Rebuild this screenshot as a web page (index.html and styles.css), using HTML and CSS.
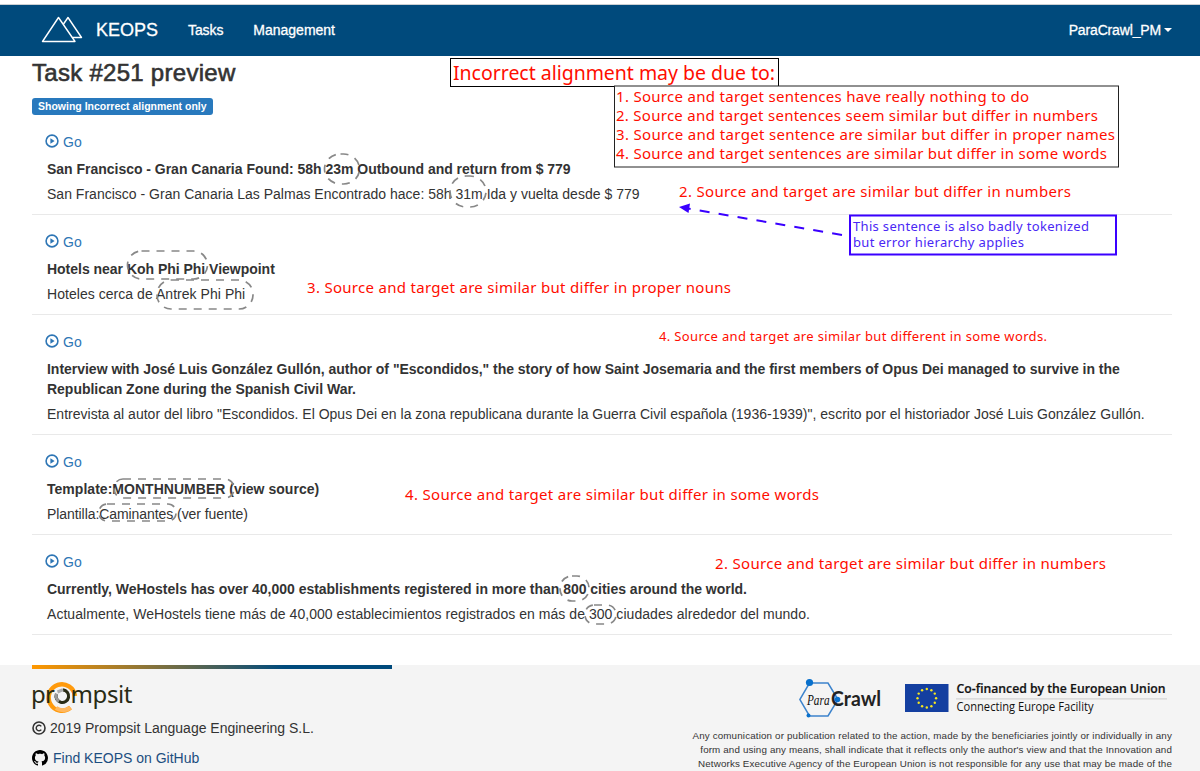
FILE: index.html
```html
<!DOCTYPE html>
<html lang="en">
<head>
<meta charset="utf-8">
<title>KEOPS - Task preview</title>
<link rel="stylesheet" href="styles.css">
</head>
<body>
<svg class="defs" width="0" height="0">
  <symbol id="play" viewBox="0 0 14 14"><circle cx="7" cy="7" r="5.9" fill="none" stroke="currentColor" stroke-width="1.6"/><path d="M5.4 4.3v5.4L9.6 7z" fill="currentColor"/></symbol>
</svg>
<header class="navbar">
  <svg class="brand-icon" width="42" height="28" viewBox="0 0 42 28" fill="none" stroke="#fff" stroke-width="1.4" stroke-linejoin="round"><path d="M1.5 25.5 17.5 1.5 34 25.5z"/><path d="M22.5 8 27 1.5 40.5 21.5H31.5"/></svg>
  <a class="brand">KEOPS</a>
  <nav class="nav"><a class="tasks">Tasks</a><a class="management">Management</a></nav>
  <a class="user">ParaCrawl_PM<span class="caret"></span></a>
</header>
<main class="content">
  <h1 class="title"><span>Task #251 preview</span></h1>
  <div class="filter"><span class="label">Showing Incorrect alignment only</span></div>
  <section class="pair">
    <a class="go"><svg width="14" height="14"><use href="#play"/></svg>Go</a>
    <p class="source">San Francisco - Gran Canaria Found: 58h 23m Outbound and return from $ 779</p>
    <p class="target">San Francisco - Gran Canaria Las Palmas Encontrado hace: 58h 31m Ida y vuelta desde $ 779</p>
  </section>
  <section class="pair">
    <a class="go"><svg width="14" height="14"><use href="#play"/></svg>Go</a>
    <p class="source">Hotels near Koh Phi Phi Viewpoint</p>
    <p class="target roomy">Hoteles cerca de Antrek Phi Phi</p>
  </section>
  <section class="pair">
    <a class="go"><svg width="14" height="14"><use href="#play"/></svg>Go</a>
    <p class="source">Interview with José Luis González Gullón, author of "Escondidos," the story of how Saint Josemaria and the first members of Opus Dei managed to survive in the<br>Republican Zone during the Spanish Civil War.</p>
    <p class="target">Entrevista al autor del libro "Escondidos. El Opus Dei en la zona republicana durante la Guerra Civil española (1936-1939)", escrito por el historiador José Luis González Gullón.</p>
  </section>
  <section class="pair">
    <a class="go"><svg width="14" height="14"><use href="#play"/></svg>Go</a>
    <p class="source roomy">Template:MONTHNUMBER (view source)</p>
    <p class="target snug">Plantilla:Caminantes (ver fuente)</p>
  </section>
  <section class="pair">
    <a class="go"><svg width="14" height="14"><use href="#play"/></svg>Go</a>
    <p class="source">Currently, WeHostels has over 40,000 establishments registered in more than 800 cities around the world.</p>
    <p class="target roomy">Actualmente, WeHostels tiene más de 40,000 establecimientos registrados en más de 300 ciudades alrededor del mundo.</p>
  </section>
</main>
<footer class="footer">
  <div class="company">
    <div class="stripe"></div>
    <svg class="prompsit" width="104" height="34" viewBox="0 0 104 34">
      <path d="M38.5 27.5A13.2 13.2 0 1 1 43 16" fill="none" stroke="#ff9a0c" stroke-width="4.4"/>
      <path d="M38.5 27.8A13 13 0 0 1 24 28" fill="none" stroke="#ffb75e" stroke-width="4.2"/>
      <circle cx="30.3" cy="16.3" r="7.5" fill="#f4f4f4"/>
      <path d="M31 9.9A6.3 6.3 0 1 1 24.4 14" fill="none" stroke="#292b15" stroke-width="3.1"/>
      <path d="M24.6 13.6A6.3 6.3 0 0 0 27 21.3" fill="none" stroke="#999" stroke-width="3"/>
      <path d="M25.5 12 31 9.7" stroke="#aaa" stroke-width="3"/>
      <g class="logo-word"><text x="-1" y="23" textLength="24">pr</text><text x="38.5" y="23" textLength="62">mpsit</text></g>
    </svg>
    <p class="copyright"><svg width="14" height="14" viewBox="0 0 14 14" fill="none" stroke="#333"><circle cx="7" cy="7" r="6" stroke-width="1.6"/><path d="M9.3 5.4A2.8 2.8 0 1 0 9.3 8.6" stroke-width="1.4"/></svg>2019 Prompsit Language Engineering S.L.</p>
    <a class="github"><svg width="16" height="16" viewBox="0 0 16 16"><path d="M8 0C3.58 0 0 3.58 0 8c0 3.54 2.29 6.53 5.47 7.59.4.07.55-.17.55-.38 0-.19-.01-.82-.01-1.49-2.01.37-2.53-.49-2.69-.94-.09-.23-.48-.94-.82-1.13-.28-.15-.68-.52-.01-.53.63-.01 1.08.58 1.23.82.72 1.21 1.87.87 2.33.66.07-.52.28-.87.51-1.07-1.78-.2-3.64-.89-3.64-3.95 0-.87.31-1.59.82-2.15-.08-.2-.36-1.02.08-2.12 0 0 .67-.21 2.2.82.64-.18 1.32-.27 2-.27s1.36.09 2 .27c1.53-1.04 2.2-.82 2.2-.82.44 1.1.16 1.92.08 2.12.51.56.82 1.27.82 2.15 0 3.07-1.87 3.75-3.65 3.95.29.25.54.73.54 1.48 0 1.07-.01 1.93-.01 2.2 0 .21.15.46.55.38A8.01 8.01 0 0 0 16 8c0-4.42-3.58-8-8-8z"/></svg><span>Find KEOPS on GitHub</span></a>
  </div>
  <div class="funding">
    <div class="logos">
      <svg width="83" height="42" viewBox="0 0 83 42">
        <path d="M10.5 6H29L39 22.5 29 39H10.5L.8 22.5z" fill="none" stroke="#3c83cc" stroke-width="1.5"/>
        <circle cx="10.5" cy="5.5" r="3.6" fill="#0870cc"/><circle cx="9.5" cy="38.5" r="2" fill="#0870cc"/><circle cx="38.5" cy="22.5" r="2.8" fill="#0870cc"/>
        <text class="para" x="8" y="28" textLength="22.5" lengthAdjust="spacingAndGlyphs">Para</text>
        <text class="crawl" x="32" y="29" textLength="50" lengthAdjust="spacingAndGlyphs">Crawl</text>
      </svg>
      <svg width="267" height="42" viewBox="0 0 267 42">
        <path d="M0 7H43.5V35H0z" fill="#143fa0"/>
        <g fill="#f7e71c"><circle cx="21.8" cy="12" r="1.2"/><circle cx="26.4" cy="13.2" r="1.2"/><circle cx="29.8" cy="16.6" r="1.2"/><circle cx="31.1" cy="21.2" r="1.2"/><circle cx="29.8" cy="25.8" r="1.2"/><circle cx="26.4" cy="29.2" r="1.2"/><circle cx="21.8" cy="30.5" r="1.2"/><circle cx="17.1" cy="29.2" r="1.2"/><circle cx="13.7" cy="25.8" r="1.2"/><circle cx="12.5" cy="21.2" r="1.2"/><circle cx="13.7" cy="16.6" r="1.2"/><circle cx="17.1" cy="13.2" r="1.2"/></g>
        <text class="eu bold" x="51.5" y="16" textLength="209" lengthAdjust="spacingAndGlyphs">Co-financed by the European Union</text>
        <path d="M51 21.9H262" stroke="#ccc"/>
        <text class="eu" x="51.5" y="34.4" textLength="137" lengthAdjust="spacingAndGlyphs">Connecting Europe Facility</text>
      </svg>
    </div>
    <p class="disclaimer"><span class="d1">Any comunication or publication related to the action, made by the beneficiaries jointly or individually in any</span><br><span class="d2">form and using any means, shall indicate that it reflects only the author's view and that the Innovation and</span><br><span class="d3">Networks Executive Agency of the European Union is not responsible for any use that may be made of the</span></p>
  </div>
</footer>
<!-- Reviewer annotations drawn over the page -->
<svg class="annotations" width="1200" height="771" viewBox="0 0 1200 771">
  <g class="rings">
    <rect x="324.5" y="154" width="35" height="30" rx="16"/>
    <rect x="450" y="176" width="36" height="31" rx="16"/>
    <rect x="127.5" y="251" width="80" height="28" rx="14"/>
    <rect x="157" y="280" width="96" height="29" rx="14"/>
    <rect x="114" y="479" width="120" height="19" rx="9"/>
    <rect x="99" y="504" width="77" height="17" rx="8"/>
    <rect x="560" y="576" width="29" height="25" rx="12"/>
    <rect x="585" y="605" width="31" height="19" rx="9"/>
  </g>
  <rect x="450.5" y="58.5" width="328" height="28" fill="#fff" stroke="#000"/>
  <rect x="614.5" y="86" width="504" height="81" fill="#fff" stroke="#222"/>
  <g class="note">
    <text class="big" x="453" y="80" textLength="322">Incorrect alignment may be due to:</text>
    <text x="616" y="102" textLength="413">1. Source and target sentences have really nothing to do</text>
    <text x="616" y="121" textLength="482">2. Source and target sentences seem similar but differ in numbers</text>
    <text x="616" y="140" textLength="499">3. Source and target sentence are similar but differ in proper names</text>
    <text x="616" y="159" textLength="491">4. Source and target sentences are similar but differ in some words</text>
    <text x="679" y="197" textLength="392">2. Source and target are similar but differ in numbers</text>
    <text x="307" y="293" textLength="424">3. Source and target are similar but differ in proper nouns</text>
    <text class="small" x="659" y="341" textLength="388">4. Source and target are similar but different in some words.</text>
    <text x="405" y="500" textLength="414">4. Source and target are similar but differ in some words</text>
    <text x="715" y="569" textLength="391">2. Source and target are similar but differ in numbers</text>
  </g>
  <path d="M842 235 688 208.5" fill="none" stroke="#3a00ff" stroke-width="1.9" stroke-dasharray="10 9.2"/>
  <path d="M679 207 690 203.5 688.5 213z" fill="#3a00ff"/>
  <rect x="850" y="215.5" width="266" height="39" fill="#fff" stroke="#3a00ff" stroke-width="2"/>
  <g class="note blue">
    <text x="853" y="231" textLength="236">This sentence is also badly tokenized</text>
    <text x="853" y="247" textLength="171">but error hierarchy applies</text>
  </g>
</svg>
</body>
</html>
```

FILE: styles.css
```css
* { box-sizing: border-box; }
body { margin: 0; height: 771px; overflow: hidden; position: relative; display: flex; flex-direction: column; background: #fff; color: #333; font: 14px/20px "Liberation Sans", Arial, sans-serif; }
p, h1 { margin: 0; }
svg { display: block; flex: none; }
.defs { position: absolute; }
.navbar { flex: none; height: 52px; margin-top: 4px; padding: 0 28px 2px 41px; border-top: 1px solid #ccd0d3; background: #004a7c; color: #fff; display: flex; align-items: center; -webkit-text-stroke: .3px; }
.brand { margin-left: 13px; width: 92px; font-size: 18px; }
.nav { display: flex; gap: 30px; }
.tasks { letter-spacing: -.1px; }
.user { margin-left: auto; display: flex; align-items: center; gap: 3px; letter-spacing: -.15px; }
.caret { border: 4px solid transparent; border-top-color: #fff; border-bottom: 0; }
.content { flex: none; height: 609px; padding: 0 28px 0 32px; }
.title { height: 42px; padding-top: 4px; font-size: 24px; line-height: 26px; font-weight: 400; letter-spacing: .28px; -webkit-text-stroke: .6px; }
.filter { height: 17px; display: flex; }
.label { padding: 0 6px; border-radius: 3px; background: #2879bd; color: #fff; font-size: 10.5px; line-height: 17px; font-weight: bold; white-space: nowrap; }
.pair { padding: 17px 0 10px 15px; border-bottom: 1px solid #e9e9e9; white-space: nowrap; }
.go { display: flex; align-items: center; gap: 4px; margin-left: -2px; color: #2e76b5; }
.go svg { margin-bottom: 2px; }
.source { margin-top: 7px; font-weight: bold; letter-spacing: -.02px; }
.source.roomy { letter-spacing: .03px; }
.target { margin-top: 5px; letter-spacing: .012px; }
.target.roomy { letter-spacing: .045px; }
.target.snug { letter-spacing: -.07px; }
.footer { flex: none; height: 106px; padding: 0 28px 0 32px; background: #f4f4f4; display: flex; justify-content: space-between; }
.company { width: 360px; }
.stripe { height: 4px; background: linear-gradient(90deg, #ff9800, #004a7c 70%); }
.prompsit { margin-top: 11px; overflow: visible; }
.logo-word { font: 24px "Noto Sans", sans-serif; fill: #292b15; }
.copyright { margin-top: 4px; display: flex; align-items: center; gap: 4px; }
.github { margin-top: 10px; display: flex; align-items: center; gap: 5px; color: #1c4e80; }
.funding { width: 500px; }
.logos { display: flex; justify-content: flex-end; gap: 23px; padding-top: 12px; }
.para { font: italic 15px "Liberation Serif", serif; fill: #111; }
.crawl { font: bold 20px Lato, sans-serif; fill: #222; }
.eu { font: 12px "Open Sans", sans-serif; fill: #111; }
.eu.bold { font-weight: 600; stroke: #111; stroke-width: .2; }
.disclaimer { margin-top: 10px; font-size: 9.8px; line-height: 14px; text-align: right; white-space: nowrap; }
.d1 { letter-spacing: .15px; }
.d2 { letter-spacing: .14px; }
.d3 { letter-spacing: .135px; }
.annotations { position: absolute; left: 0; top: 0; }
.rings { fill: none; stroke: #888; stroke-width: 1.7; stroke-dasharray: 8 7; }
.note { font: 15px "Noto Sans", sans-serif; fill: #ff0d00; }
.note .big { font-size: 19.5px; }
.note .small { font-size: 13px; }
.note.blue { font-size: 13px; fill: #4a28f5; }
```
